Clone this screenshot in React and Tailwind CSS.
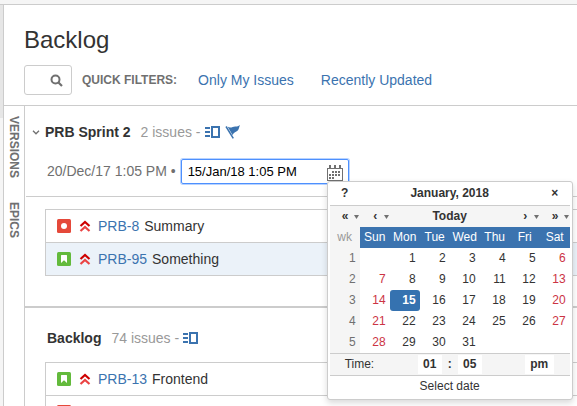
import { useState } from 'react';

const weekDays = ['Sun', 'Mon', 'Tue', 'Wed', 'Thu', 'Fri', 'Sat'];

const weeks = [
    [null, 1, 2, 3, 4, 5, 6],
    [7, 8, 9, 10, 11, 12, 13],
    [14, 15, 16, 17, 18, 19, 20],
    [21, 22, 23, 24, 25, 26, 27],
    [28, 29, 30, 31, null, null, null],
];

const sprintIssues = [
    { id: 'PRB-8', type: 'bug', summary: 'Summary' },
    { id: 'PRB-95', type: 'story', summary: 'Something', selected: true },
];

const backlogIssues = [
    { id: 'PRB-13', type: 'story', summary: 'Frontend' },
    { type: 'bug' },
];

function TypeIcon({ type }) {
    return (
        <svg className="h-3.5 w-3.5 shrink-0" viewBox="0 0 14 14" aria-hidden="true">
            <rect width="14" height="14" rx="1.5" fill={type === 'bug' ? '#e5493a' : '#63ba3c'} />
            {type === 'bug' ? (
                <circle cx="7" cy="7" r="3" fill="#fff" />
            ) : (
                <path d="M4 3.500q0-.5.5-.5h5q.5 0 .5.5V11L7 8.200 4 11z" fill="#fff" />
            )}
        </svg>
    );
}

function PriorityIcon() {
    return (
        <svg className="h-3.5 w-3 shrink-0" viewBox="0 0 12 14" fill="none" strokeWidth="2.2" aria-hidden="true">
            <path d="M1.500 7 6 3l4.500 4" stroke="#ce0000" />
            <path d="M1.500 12 6 8l4.500 4" stroke="#ea4444" />
        </svg>
    );
}

function PagesIcon() {
    return (
        <svg className="h-3 w-4" viewBox="0 0 16 12" shapeRendering="crispEdges" aria-hidden="true">
            <path d="M0 1h5v2H0zM0 5h5v2H0zM0 9h5v2H0z" fill="#3b73af" />
            <path d="M6 0h9v12H6zM8 2v8h5V2z" fill="#3b73af" fillRule="evenodd" />
        </svg>
    );
}

function FlagIcon() {
    return (
        <svg className="h-3.5 w-4" viewBox="0 0 16 14" aria-hidden="true">
            <path d="M2.500 1.500C5.500 4 8 1.200 10.500 1.500c1.500.2 2.500-.4 4.500-1.500-1 2-.8 4.200-2.500 5.700C11 7 9 7 7.500 10z" fill="#3b73af" />
            <path d="M1 1.500 8.300 13.300" stroke="#3b73af" strokeWidth="1.500" fill="none" />
        </svg>
    );
}

function CalendarIcon() {
    return (
        <svg className="h-4 w-4" viewBox="0 0 16 16" shapeRendering="crispEdges" aria-hidden="true">
            <path d="M0 3h16v13H0zM1 4v11h14V4z" fill="#707070" fillRule="evenodd" />
            <path d="M2 0h2v4H2zM7 0h2v4H7zM12 0h2v4h-2z" fill="#707070" />
            <path
                d="M5 6h2v2H5zM8 6h2v2H8zM11 6h2v2h-2zM2 9h2v2H2zM5 9h2v2H5zM8 9h2v2H8zM11 9h2v2h-2zM2 12h2v2H2zM5 12h2v2H5z"
                fill="#707070"
            />
        </svg>
    );
}

function IssueRow({ issue }) {
    return (
        <li className={`flex h-[33px] items-center border-b border-[#ccc] pl-[11px] ${issue.selected ? 'bg-[#ebf2f9]' : 'bg-white'}`}>
            <TypeIcon type={issue.type} />
            {issue.id && (
                <>
                    <span className="ml-2 flex">
                        <PriorityIcon />
                    </span>
                    <a href={`#${issue.id}`} className="ml-[7px] text-[#3b73af]">{issue.id}</a>
                    <span className="ml-[5px]">{issue.summary}</span>
                </>
            )}
        </li>
    );
}

function IssueList({ issues }) {
    return (
        <ul className="ml-5 border-t border-l border-[#ccc]">
            {issues.map((issue, index) => (
                <IssueRow key={index} issue={issue} />
            ))}
        </ul>
    );
}

function NavButton({ label, symbol }) {
    return (
        <button type="button" aria-label={label} className="flex w-[30px] items-center gap-[5px] pl-3 font-bold">
            <span className="w-[7px] text-center">{symbol}</span>
            <svg className="h-1 w-[5px]" viewBox="0 0 5 4" aria-hidden="true">
                <path d="M0 0h5L2.500 4z" fill="#707070" />
            </svg>
        </button>
    );
}

function DayCell({ day, column, selected, onSelect }) {
    const weekend = column === 0 || column === 6;
    const look = selected
        ? 'rounded-[3px] bg-[#3572b0] font-bold text-white'
        : weekend
          ? 'text-[#cc3344]'
          : 'text-[#333]';

    return (
        <td className="p-0">
            {day && (
                <button type="button" onClick={() => onSelect(day)} className={`block h-[21px] w-full pr-1 text-right ${look}`}>
                    {day}
                </button>
            )}
        </td>
    );
}

function DatePicker() {
    const [selected, setSelected] = useState(15);

    return (
        <div className="absolute top-[22px] left-[146px] z-10 w-[246px] rounded-[3px] border border-[#ccc] bg-white px-0.5 pb-0.5 text-xs leading-[21px] text-[#333] shadow-[0_3px_6px_rgba(0,0,0,0.15)]">
            <div className="flex h-6 items-center border-b border-[#ccc] font-bold">
                <button type="button" className="w-[30px] font-bold">?</button>
                <div className="grow text-center">January, 2018</div>
                <button type="button" aria-label="Close" className="w-[30px] font-bold">×</button>
            </div>
            <div className="flex h-[21px] items-center bg-[#f5f5f5]">
                <NavButton label="Previous year" symbol="«" />
                <NavButton label="Previous month" symbol="‹" />
                <button type="button" className="grow text-center font-bold">Today</button>
                <NavButton label="Next month" symbol="›" />
                <NavButton label="Next year" symbol="»" />
            </div>
            <table className="w-full table-fixed border-collapse">
                <thead>
                    <tr className="h-[21px] bg-[#3b73af] text-white">
                        <th className="bg-[#f5f5f5] p-0 font-normal text-[#999]">wk</th>
                        {weekDays.map((day) => (
                            <th key={day} className="p-0 text-center font-normal">{day}</th>
                        ))}
                    </tr>
                </thead>
                <tbody>
                    {weeks.map((week, index) => (
                        <tr key={index} className="h-[21px]">
                            <th className="bg-[#f5f5f5] p-0 pr-1 text-right font-normal text-[#707070]">{index + 1}</th>
                            {week.map((day, column) => (
                                <DayCell
                                    key={column}
                                    day={day}
                                    column={column}
                                    selected={day === selected}
                                    onSelect={setSelected}
                                />
                            ))}
                        </tr>
                    ))}
                </tbody>
            </table>
            <div className="flex h-[23px] items-center border-y border-[#ccc] bg-[#f5f5f5] pr-4 pl-[15px]">
                <span className="w-[73px]">Time:</span>
                <button type="button" className="h-[19px] w-6 bg-white leading-[19px] font-bold">01</button>
                <span className="w-4 text-center font-bold">:</span>
                <button type="button" className="h-[19px] w-6 bg-white leading-[19px] font-bold">05</button>
                <button type="button" className="ml-auto h-[19px] w-[29px] bg-white leading-[19px] font-bold">pm</button>
            </div>
            <div className="text-center">Select date</div>
        </div>
    );
}

export default function App() {
    const [endDate, setEndDate] = useState('15/Jan/18 1:05 PM');

    return (
        <div className="flex h-screen flex-col overflow-hidden bg-white font-['Liberation_Sans',Arial,sans-serif] text-sm text-[#333]">
            <div className="h-[5px] shrink-0 border-b border-[#ccc] bg-[#f5f5f5]" />
            <div className="flex min-h-0 grow">
                <div className="w-1 shrink-0 border-r border-[#ccc] bg-[#f5f5f5]">
                    <div className="h-[113px] bg-[#e6e6e6]" />
                </div>
                <div className="flex min-w-0 grow flex-col">
                    <header className="shrink-0 border-b border-[#ccc] px-5 pt-5 pb-[10px]">
                        <h1 className="text-2xl leading-[30px]">Backlog</h1>
                        <div className="mt-[10px] flex h-[30px] items-center">
                            <label className="relative block h-[30px] w-12">
                                <input
                                    type="search"
                                    aria-label="Search issues"
                                    className="h-full w-full rounded-[3px] border border-[#ccc] pr-5 pl-1"
                                />
                                <svg className="absolute top-[9px] right-[9px] h-[13px] w-[13px]" viewBox="0 0 13 13" fill="none" stroke="#707070" aria-hidden="true">
                                    <circle cx="5.500" cy="5.500" r="4" strokeWidth="2" />
                                    <path d="m8.500 8.500 3.500 3.500" strokeWidth="2.200" />
                                </svg>
                            </label>
                            <span className="ml-[10px] text-xs font-bold text-[#707070]">QUICK FILTERS:</span>
                            <a href="#mine" className="ml-[21px] text-[#3b73af]">Only My Issues</a>
                            <a href="#recent" className="ml-[27px] text-[#3b73af]">Recently Updated</a>
                        </div>
                    </header>

                    <div className="flex min-h-0 grow">
                        <aside className="flex w-[21px] shrink-0 flex-col items-center gap-6 border-r border-[#ccc] pt-[10px] text-xs font-bold text-[#707070]">
                            <button type="button" className="[writing-mode:vertical-rl]">VERSIONS</button>
                            <button type="button" className="[writing-mode:vertical-rl]">EPICS</button>
                        </aside>

                        <main className="min-w-0 grow">
                            <section className="border-b-2 border-[#ccc] pb-[30px]">
                                <div className="flex h-[52px] items-center pl-[7px]">
                                    <button type="button" aria-label="Collapse sprint" className="w-[13px]">
                                        <svg className="h-[5px] w-2" viewBox="0 0 8 5" fill="none" stroke="#707070" aria-hidden="true">
                                            <path d="m1 .8 3 3 3-3" strokeWidth="1.300" />
                                        </svg>
                                    </button>
                                    <h2 className="font-bold">PRB Sprint 2</h2>
                                    <span className="ml-[10px] text-[#999]">2 issues -</span>
                                    <button type="button" aria-label="Linked pages" className="ml-1">
                                        <PagesIcon />
                                    </button>
                                    <button type="button" aria-label="Sprint flag" className="ml-1">
                                        <FlagIcon />
                                    </button>
                                </div>
                                <div className="ml-px flex h-[39px] items-start border-b border-[#ccc] pt-px pl-[21px]">
                                    <span className="leading-6 whitespace-nowrap text-[#707070]">20/Dec/17 1:05 PM •</span>
                                    <div className="relative ml-[5px] h-[25px] w-[168px] shrink-0">
                                        <input
                                            type="text"
                                            aria-label="End date"
                                            value={endDate}
                                            onChange={(event) => setEndDate(event.target.value)}
                                            className="block h-full w-full rounded-[2px] border border-[#4d90fe] pr-6 pl-1.5 text-[13px] text-black shadow-[0_0_0_1px_rgba(77,144,254,0.4)]"
                                        />
                                        <button type="button" aria-label="Choose date" className="absolute top-1.5 right-1.5">
                                            <CalendarIcon />
                                        </button>
                                        <DatePicker />
                                    </div>
                                </div>
                                <div className="pt-3">
                                    <IssueList issues={sprintIssues} />
                                </div>
                            </section>

                            <section>
                                <div className="flex h-[54px] items-center pt-1.5 pl-[22px]">
                                    <h2 className="font-bold">Backlog</h2>
                                    <span className="ml-[10px] text-[#999]">74 issues -</span>
                                    <button type="button" aria-label="Linked pages" className="ml-1">
                                        <PagesIcon />
                                    </button>
                                </div>
                                <IssueList issues={backlogIssues} />
                            </section>
                        </main>
                    </div>
                </div>
            </div>
        </div>
    );
}
